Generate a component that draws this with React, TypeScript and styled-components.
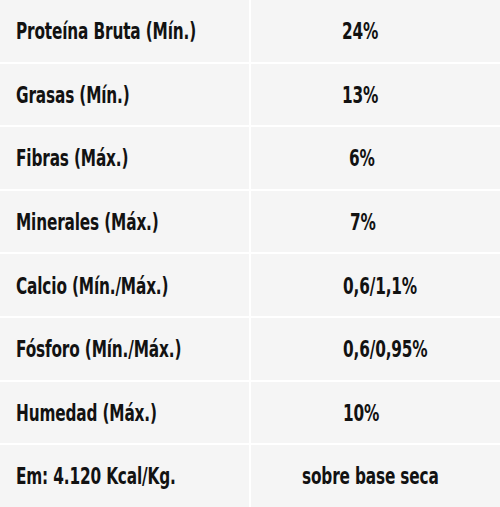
import React from 'react'
import styled, { createGlobalStyle } from 'styled-components'

const GlobalStyle = createGlobalStyle`
    html, body {
        margin: 0;
        padding: 0;
        background: #ffffff;
    }
`

const Table = styled.div`
    display: grid;
    grid-template-columns: 249px 249px;
    grid-auto-rows: 61.6px;
    gap: 2px;
    width: 500px;
    font-family: "DejaVu Sans Condensed", "DejaVu Sans", sans-serif;
    font-weight: 700;
    font-size: 23px;
    color: #121212;
`

const Cell = styled.div<{ $indent?: number }>`
    background: #f5f5f5;
    display: flex;
    align-items: center;
    padding-left: ${p => p.$indent ?? 16}px;
    padding-top: 1px;
    white-space: nowrap;
`

// narrow the lettering to match the condensed face of the reference
const Text = styled.span`
    display: inline-block;
    transform: scaleX(0.74);
    transform-origin: left center;
    letter-spacing: -0.2px;
`

const rows: Array<[string, string, number]> = [
    ['Proteína Bruta (Mín.)', '24%', 91],
    ['Grasas (Mín.)', '13%', 91],
    ['Fibras (Máx.)', '6%', 98],
    ['Minerales (Máx.)', '7%', 99],
    ['Calcio (Mín./Máx.)', '0,6/1,1%', 92],
    ['Fósforo (Mín./Máx.)', '0,6/0,95%', 92],
    ['Humedad (Máx.)', '10%', 92],
    ['Em: 4.120 Kcal/Kg.', 'sobre base seca', 51],
]

export default function App(): React.ReactElement {
    return <>
        <GlobalStyle />
        <Table>
            {rows.map(([label, value, indent]) => (
                <React.Fragment key={label}>
                    <Cell><Text>{label}</Text></Cell>
                    <Cell $indent={indent}><Text>{value}</Text></Cell>
                </React.Fragment>
            ))}
        </Table>
    </>
}
